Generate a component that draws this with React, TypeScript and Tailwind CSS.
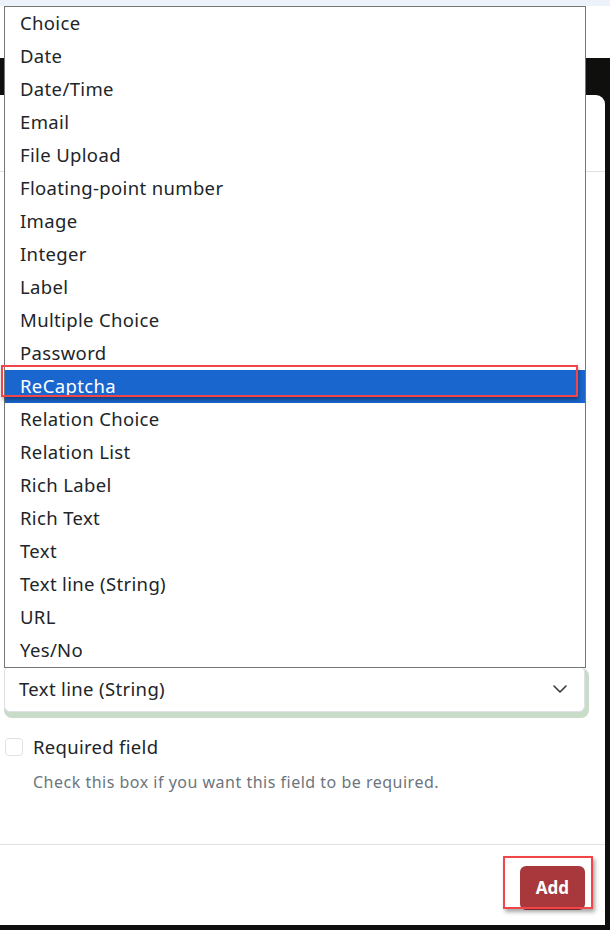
const options = [
  'Choice',
  'Date',
  'Date/Time',
  'Email',
  'File Upload',
  'Floating-point number',
  'Image',
  'Integer',
  'Label',
  'Multiple Choice',
  'Password',
  'ReCaptcha',
  'Relation Choice',
  'Relation List',
  'Rich Label',
  'Rich Text',
  'Text',
  'Text line (String)',
  'URL',
  'Yes/No',
];

const selected = 'ReCaptcha';

function Chevron() {
  return (
    <svg width="14" height="8" viewBox="0 0 14 8" fill="none">
      <polyline points="1,1 7,7 13,1" stroke="#343a40" strokeWidth="1.6" strokeLinecap="round" strokeLinejoin="round" />
    </svg>
  );
}

export default function App() {
  return (
    <div
      className="relative w-[610px] h-[930px] overflow-hidden bg-[#0f100e] text-[#212529]"
      style={{ fontFamily: '"Noto Sans", "Open Sans", sans-serif' }}
    >
      {/* page behind the overlay */}
      <div className="h-[58px] bg-white">
        <div className="h-[6px] bg-[#edf1f9]" />
      </div>

      {/* modal */}
      <div className="mt-[37px] w-[605px] h-[830px] bg-white rounded-tr-[9px] flex flex-col">
        <div className="h-[77px] border-b border-[#dee2e6] shrink-0" />

        <div className="flex-1 pl-[4px] pr-[20px] pt-[494px]">
          <div className="h-[46px] flex items-center justify-between pl-[14px] pr-[17px] rounded-[6px] border border-[#dee2e6] bg-white shadow-[2px_4px_0_2px_#c9dcc9]">
            <span className="text-[18.5px] tracking-[0.35px]">Text line (String)</span>
            <Chevron />
          </div>

          <div className="mt-[26px] flex items-center gap-[10px] pl-[1px]">
            <div className="w-[18px] h-[18px] rounded-[4px] border border-[#dee2e6] bg-white" />
            <span className="text-[18.5px] leading-[18px] tracking-[0.3px]">Required field</span>
          </div>
          <div className="mt-[14px] pl-[29px] text-[16px] tracking-[0.5px] text-[#6c757d]">
            Check this box if you want this field to be required.
          </div>
        </div>

        <div className="h-[81px] shrink-0 border-t border-[#dee2e6] flex justify-end items-start pt-[21px] pr-[20px]">
          <button className="relative w-[65px] h-[44px] rounded-[6px] bg-[#a8383b] text-white font-bold text-[17px]">
            Add
            <span className="absolute left-[-17px] top-[-10px] w-[90px] h-[53px] border-2 border-[#f2454a] shadow-[2px_3px_4px_rgba(0,0,0,0.35)]" />
          </button>
        </div>
      </div>

      {/* open dropdown list */}
      <ul className="absolute left-[4px] top-[6px] w-[582px] bg-white border border-[#767676] py-0">
        {options.map((o) => (
          <li
            key={o}
            className={
              o === selected
                ? 'relative h-[33px] flex items-center pl-[15px] pb-[1px] text-[18.5px] tracking-[0.35px] bg-[#1a66cf] text-white'
                : 'h-[33px] flex items-center pl-[15px] pb-[1px] text-[18.5px] tracking-[0.35px]'
            }
          >
            {o}
            {o === selected && (
              <span className="absolute left-[-4px] top-[-5px] w-[577px] h-[32px] border-2 border-[#f2454a] shadow-[1px_3px_4px_rgba(0,0,0,0.35)]" />
            )}
          </li>
        ))}
      </ul>
    </div>
  );
}
